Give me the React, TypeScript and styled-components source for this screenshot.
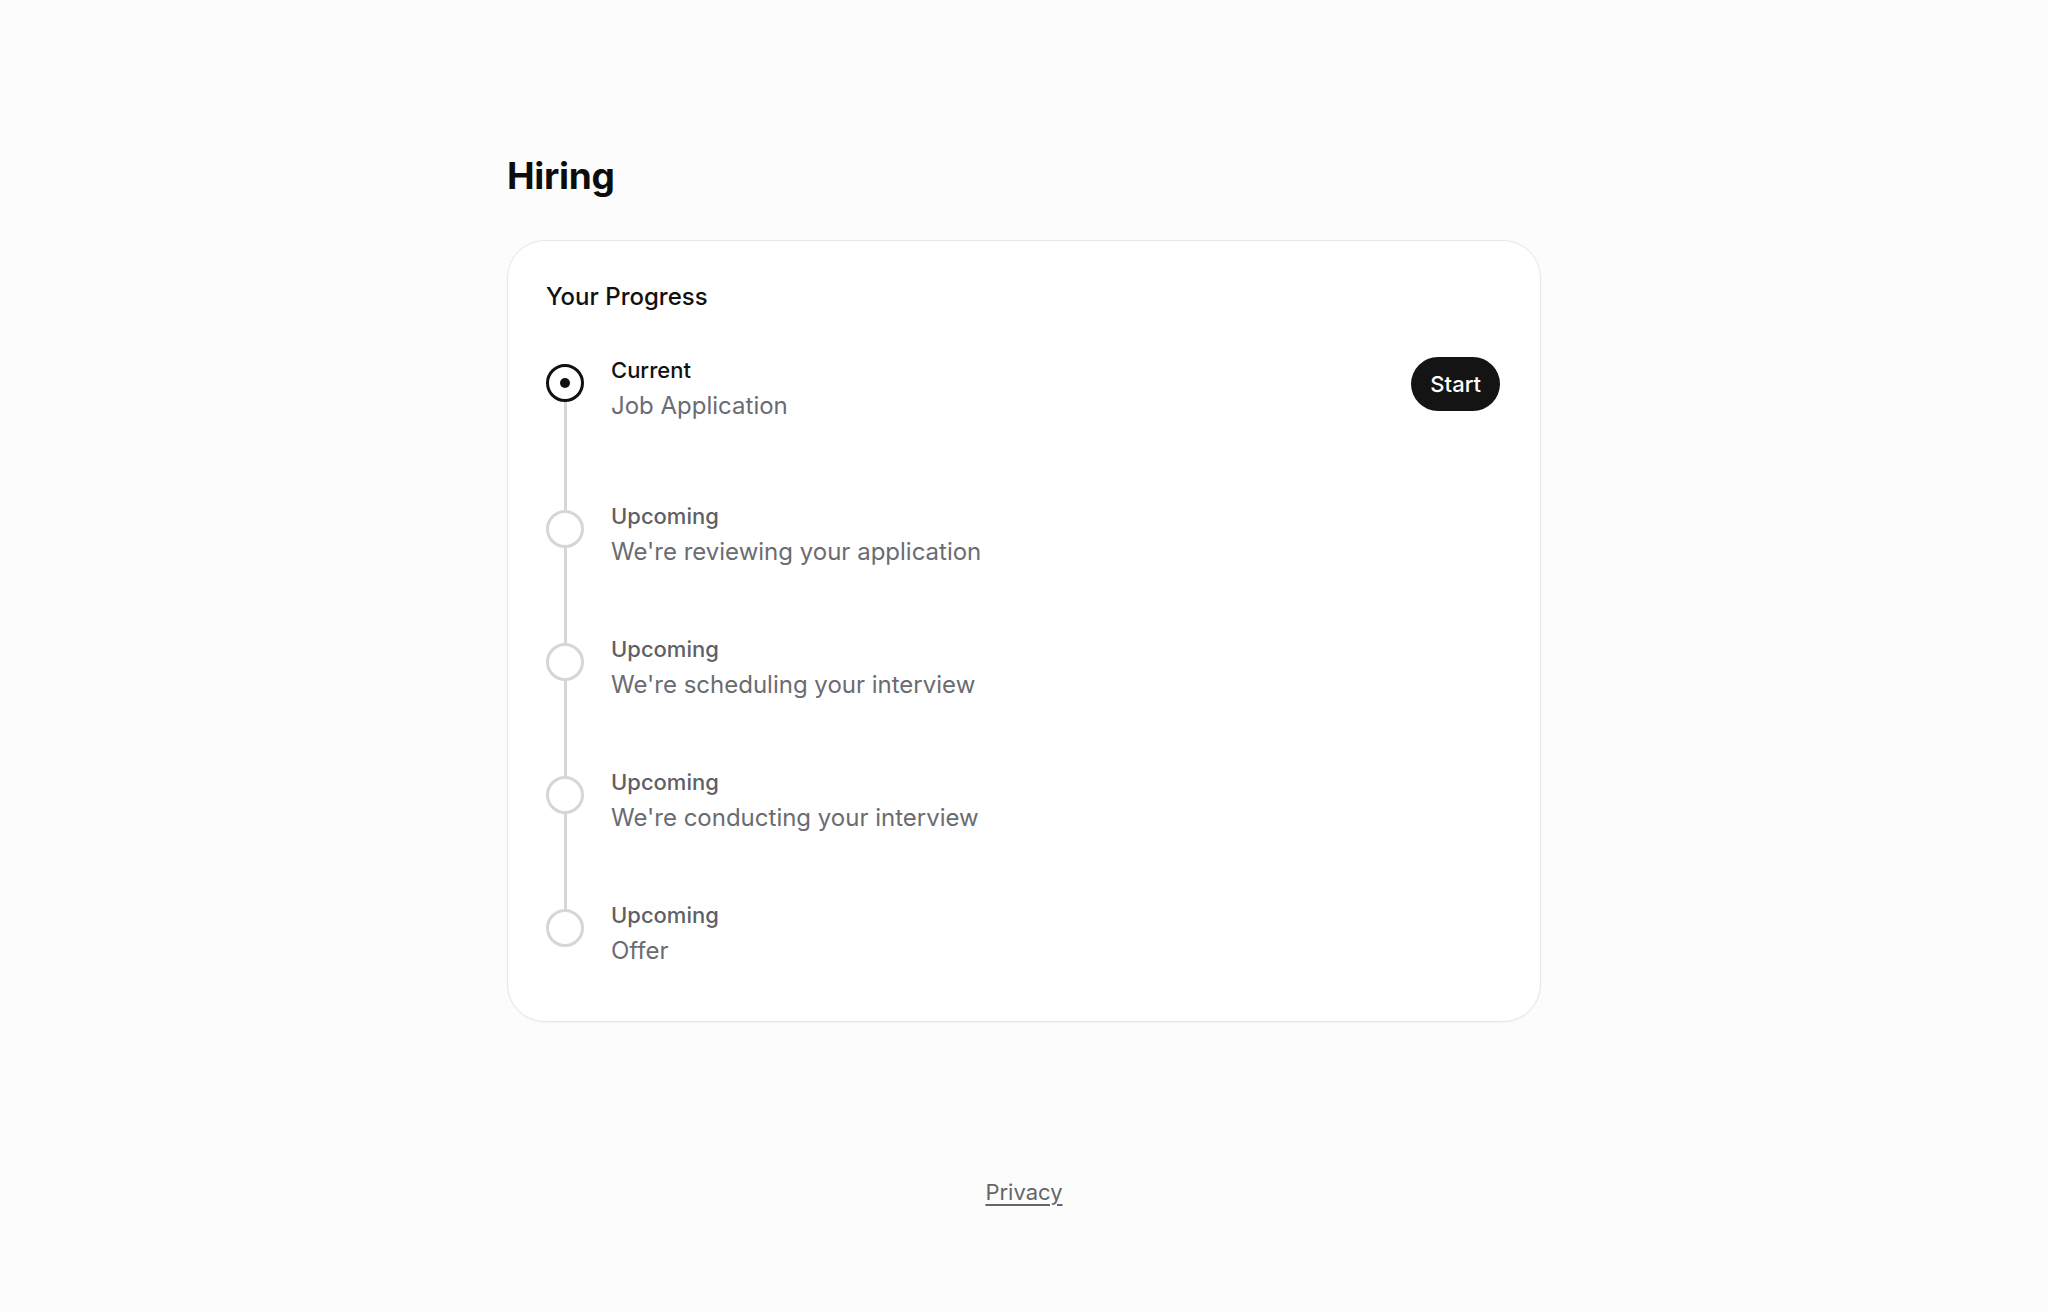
import React from 'react';
import styled, { createGlobalStyle } from 'styled-components';

const GlobalStyle = createGlobalStyle`
  html, body {
    margin: 0;
    padding: 0;
    background: #fcfcfc;
    font-family: Inter, "Noto Sans", "Liberation Sans", sans-serif;
    color: #111111;
  }
`;

const Page = styled.main`
  display: flex;
  flex-direction: column;
  align-items: center;
  padding-top: 154px;
  min-height: 1312px;
  box-sizing: border-box;
`;

const Container = styled.div`
  width: 1034px;
  display: flex;
  flex-direction: column;
`;

const Title = styled.h1`
  margin: 0 0 42px;
  font-size: 37px;
  line-height: 44px;
  font-weight: 700;
  letter-spacing: -0.3px;
  color: #0d0d0d;
`;

const Card = styled.section`
  background: #ffffff;
  border: 1.5px solid #e6e6e6;
  border-radius: 38px;
  padding: 40px 40px 53px 38px;
  box-shadow: 0 1px 2px rgba(0, 0, 0, 0.04);
`;

const CardTitle = styled.h2`
  margin: 0 0 40px;
  font-size: 24px;
  line-height: 32px;
  font-weight: 500;
  color: #111111;
`;

const StepList = styled.ol`
  list-style: none;
  margin: 0;
  padding: 0;
  display: flex;
  flex-direction: column;
`;

const Step = styled.li`
  display: flex;
  align-items: stretch;
`;

const Track = styled.div`
  width: 38px;
  display: flex;
  flex-direction: column;
  align-items: center;
  flex-shrink: 0;
`;

interface SegmentProps {
  $hidden?: boolean;
  $grow?: boolean;
}

const Segment = styled.div<SegmentProps>`
  width: 3px;
  height: ${({ $grow }) => ($grow ? 'auto' : '11px')};
  flex: ${({ $grow }) => ($grow ? '1' : '0 0 auto')};
  background: ${({ $hidden }) => ($hidden ? 'transparent' : '#d6d6d6')};
`;

interface DotProps {
  $active?: boolean;
}

const Dot = styled.div<DotProps>`
  width: 38px;
  height: 38px;
  box-sizing: border-box;
  border-radius: 50%;
  border: 3px solid ${({ $active }) => ($active ? '#111111' : '#d6d6d6')};
  background: #ffffff;
  display: flex;
  align-items: center;
  justify-content: center;
  flex-shrink: 0;

  &::after {
    content: '';
    display: ${({ $active }) => ($active ? 'block' : 'none')};
    width: 10px;
    height: 10px;
    border-radius: 50%;
    background: #111111;
  }
`;

interface BodyProps {
  $gap: number;
}

const Body = styled.div<BodyProps>`
  flex: 1;
  display: flex;
  align-items: flex-start;
  justify-content: space-between;
  padding-left: 27px;
  padding-bottom: ${({ $gap }) => $gap}px;
`;

const Text = styled.div`
  display: flex;
  flex-direction: column;
  line-height: 35px;
`;

const Status = styled.span<DotProps>`
  font-size: 22px;
  font-weight: 500;
  color: ${({ $active }) => ($active ? '#111111' : '#5f5f66')};
`;

const Label = styled.span`
  font-size: 24px;
  color: #6b6b72;
`;

const StartButton = styled.button`
  margin-top: 4px;
  height: 54px;
  padding: 0 19px;
  border: none;
  border-radius: 27px;
  background: #141414;
  color: #ffffff;
  font: inherit;
  font-size: 22px;
  font-weight: 500;
  cursor: pointer;
`;

const Footer = styled.footer`
  margin-top: 154px;
  display: flex;
  justify-content: center;
`;

const FooterLink = styled.a`
  font-size: 22px;
  line-height: 32px;
  color: #666666;
  text-decoration: underline;
  text-underline-offset: 4px;
  text-decoration-thickness: 1.5px;
`;

interface StepData {
  status: string;
  label: string;
  active?: boolean;
}

const steps: StepData[] = [
  { status: 'Current', label: 'Job Application', active: true },
  { status: 'Upcoming', label: "We're reviewing your application" },
  { status: 'Upcoming', label: "We're scheduling your interview" },
  { status: 'Upcoming', label: "We're conducting your interview" },
  { status: 'Upcoming', label: 'Offer' },
];

const App = () => {
  return (
    <>
      <GlobalStyle />
      <Page>
        <Container>
          <Title>Hiring</Title>
          <Card>
            <CardTitle>Your Progress</CardTitle>
            <StepList>
              {steps.map((step, i) => {
                const first = i === 0;
                const last = i === steps.length - 1;
                return (
                  <Step key={i}>
                    <Track>
                      <Segment $hidden={first} />
                      <Dot $active={step.active} />
                      <Segment $grow $hidden={last} />
                    </Track>
                    <Body $gap={last ? 0 : first ? 76 : 63}>
                      <Text>
                        <Status $active={step.active}>{step.status}</Status>
                        <Label>{step.label}</Label>
                      </Text>
                      {step.active && <StartButton>Start</StartButton>}
                    </Body>
                  </Step>
                );
              })}
            </StepList>
          </Card>
          <Footer>
            <FooterLink href="#">Privacy</FooterLink>
          </Footer>
        </Container>
      </Page>
    </>
  );
};

export default App;
